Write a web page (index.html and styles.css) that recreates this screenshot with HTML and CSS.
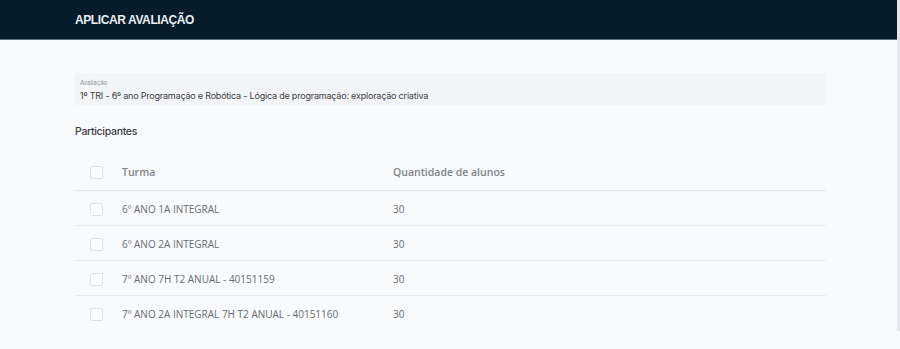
FILE: index.html
```html
<!DOCTYPE html>
<html lang="pt-BR">
<head>
  <meta charset="UTF-8">
  <meta name="viewport" content="width=device-width, initial-scale=1.0">
  <title>Aplicar avaliação</title>
  <link rel="stylesheet" href="styles.css">
</head>
<body>

  <header class="topbar">
    <h1>APLICAR AVALIAÇÃO</h1>
  </header>

  <main class="content">
    <!-- Avaliação selecionada -->
    <div class="field">
      <span class="field-label">Avaliação</span>
      <span class="field-value">1º TRI - 6º ano Programação e Robótica - Lógica de programação: exploração criativa</span>
    </div>

    <h2 class="section-title">Participantes</h2>

    <!-- Turmas -->
    <table class="classes">
      <thead>
        <tr>
          <th class="col-check"><span class="checkbox"></span></th>
          <th class="col-name">Turma</th>
          <th>Quantidade de alunos</th>
        </tr>
      </thead>
      <tbody>
        <tr>
          <td class="col-check"><span class="checkbox"></span></td>
          <td class="col-name">6º ANO 1A INTEGRAL</td>
          <td>30</td>
        </tr>
        <tr>
          <td class="col-check"><span class="checkbox"></span></td>
          <td class="col-name">6º ANO 2A INTEGRAL</td>
          <td>30</td>
        </tr>
        <tr>
          <td class="col-check"><span class="checkbox"></span></td>
          <td class="col-name">7º ANO 7H T2 ANUAL - 40151159</td>
          <td>30</td>
        </tr>
        <tr>
          <td class="col-check"><span class="checkbox"></span></td>
          <td class="col-name">7º ANO 2A INTEGRAL 7H T2 ANUAL - 40151160</td>
          <td>30</td>
        </tr>
      </tbody>
    </table>
  </main>

</body>
</html>
```

FILE: styles.css
```css
body {
  margin: 0;
  padding: 0;
  background: #f8fafc;
  font-family: 'Inter', 'Liberation Sans', sans-serif;
  color: #333;
  border-right: 3px solid #e4e8ec;
}

.topbar {
  height: 40px;
  background: #061c2b;
  border-bottom: 1px solid #5d6f7a;
  display: flex;
  align-items: center;
  padding: 0 75px;
  box-sizing: border-box;
}

.topbar h1 {
  margin: 0;
  font-family: 'Liberation Sans', sans-serif;
  font-size: 12px;
  font-weight: bold;
  letter-spacing: -0.4px;
  color: #e9eef1;
}

.content {
  padding: 33px 71px 0 75px;
}

.field {
  background: #f2f4f6;
  height: 32px;
  padding: 6px 5px 0;
  box-sizing: border-box;
  display: flex;
  flex-direction: column;
}

.field-label {
  font-size: 6px;
  color: #8a9096;
  line-height: 8px;
}

.field-value {
  margin-top: 2px;
  font-size: 9px;
  color: #3c4045;
  letter-spacing: -0.2px;
  line-height: 14px;
}

.section-title {
  margin: 20px 0 15px;
  font-size: 10.5px;
  line-height: 14px;
  font-weight: 500;
  letter-spacing: -0.3px;
  color: #3a3d40;
}

.classes {
  width: 100%;
  border-collapse: collapse;
  font-family: 'Open Sans', sans-serif;
  font-size: 10px;
  color: #676b70;
}

.classes th {
  text-align: left;
  font-weight: 600;
  font-size: 10.5px;
  color: #7e848a;
  height: 36px;
  padding: 0;
  vertical-align: middle;
}

.classes td {
  height: 35px;
  padding: 2px 0 0;
  box-sizing: border-box;
  border-top: 1px solid #e8ecef;
}

.classes thead tr {
  border-bottom: 1px solid #e2e6ea;
}

.classes tbody tr:first-child td {
  border-top: none;
}

.col-check {
  width: 47px;
  padding-left: 15px !important;
  box-sizing: border-box;
}

.col-name {
  width: 271px;
}

.checkbox {
  display: block;
  width: 11px;
  height: 11px;
  border: 1px solid #d9e2ec;
  border-radius: 2px;
  background: #fbfcfd;
}
```
